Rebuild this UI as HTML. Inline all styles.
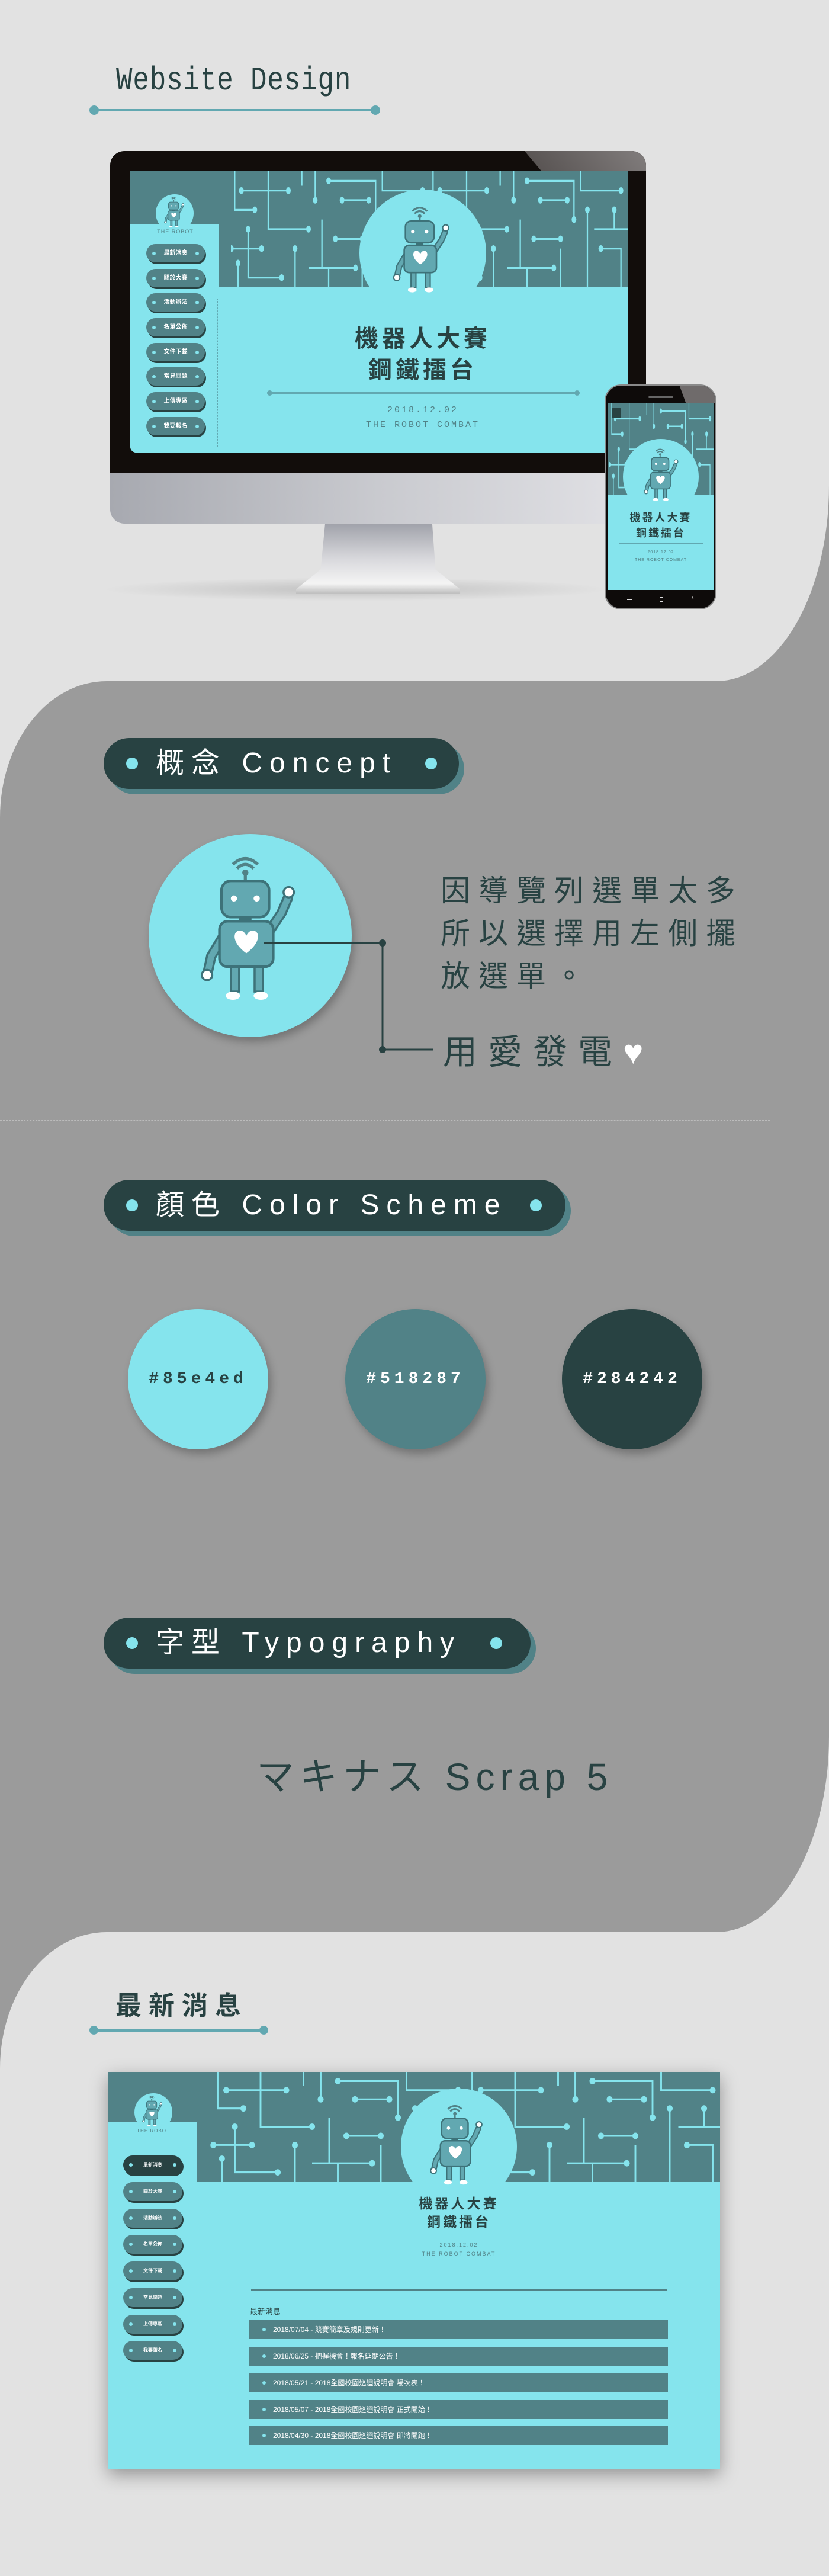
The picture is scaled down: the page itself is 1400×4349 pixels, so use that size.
<!DOCTYPE html>
<html><head><meta charset="utf-8">
<style>
*{margin:0;padding:0;box-sizing:border-box}
body{width:1400px;height:4349px;position:relative;background:#9b9b9b;font-family:"Liberation Sans","Noto Sans CJK TC",sans-serif;overflow:hidden}
.a{position:absolute}
.pill{position:absolute;left:175px;height:86px;border-radius:43px;background:#284242;box-shadow:9px 9px 0 #518287;color:#fff;font-size:48px;line-height:86px;white-space:nowrap}
.pill .d{position:absolute;top:33px;width:20px;height:20px;border-radius:50%;background:#85e4ed}
.pill .t{position:absolute;left:88px;top:0;letter-spacing:12px}
.nav{position:absolute;border-radius:20px;background:#518287;box-shadow:2px 3px 0 #284242;color:#fff;text-align:center;font-weight:bold}
.nav:before,.nav:after{content:"";position:absolute;top:50%;width:6px;height:6px;margin-top:-3px;border-radius:50%;background:#85e4ed}
.nav:before{left:10px}.nav:after{right:10px}
.row{position:absolute;left:238px;width:707px;height:32px;background:#518287;color:#fff;font-size:12px;line-height:32px;padding-left:40px}
.row:before{content:"";position:absolute;left:22px;top:13px;width:6px;height:6px;border-radius:50%;background:#85e4ed}
.cc{position:absolute;top:2210px;width:237px;height:237px;border-radius:50%;box-shadow:5px 8px 14px rgba(0,0,0,.25);text-align:center;line-height:237px;font-size:28px;font-weight:bold;letter-spacing:7px;font-family:'Liberation Mono',monospace}
</style></head><body>
<svg width="0" height="0" style="position:absolute">
<defs>
<symbol id="robot" viewBox="0 0 120 150">
<path d="M47 15Q55 7 63 15M43 11Q55 0 67 11" stroke="#518287" stroke-width="3" fill="none"/>
<circle cx="55" cy="19" r="3" fill="#518287"/><path d="M55 19V27" stroke="#518287" stroke-width="3"/>
<path d="M78 76L90 58L96 44" stroke="#3d7279" stroke-width="10" fill="none" stroke-linecap="round"/>
<path d="M78 76L90 58L96 44" stroke="#62a8b1" stroke-width="6" fill="none" stroke-linecap="round"/>
<path d="M34 80L22 100L19 114" stroke="#3d7279" stroke-width="10" fill="none" stroke-linecap="round"/>
<path d="M34 80L22 100L19 114" stroke="#62a8b1" stroke-width="6" fill="none" stroke-linecap="round"/>
<circle cx="97" cy="38" r="5" fill="#fff" stroke="#3d7279" stroke-width="2"/>
<circle cx="18" cy="118" r="5" fill="#fff" stroke="#3d7279" stroke-width="2"/>
<rect x="41" y="106" width="8" height="28" fill="#62a8b1" stroke="#3d7279" stroke-width="2"/>
<rect x="64" y="106" width="8" height="28" fill="#62a8b1" stroke="#3d7279" stroke-width="2"/>
<ellipse cx="43" cy="138" rx="7" ry="4" fill="#fff"/><ellipse cx="70" cy="138" rx="7" ry="4" fill="#fff"/>
<rect x="49" y="60" width="12" height="8" fill="#3d7279"/>
<rect x="32" y="27" width="46" height="35" rx="9" fill="#62a8b1" stroke="#3d7279" stroke-width="2.5"/>
<circle cx="44" cy="44" r="3" fill="#fff"/><circle cx="66" cy="44" r="3" fill="#fff"/>
<rect x="30" y="66" width="52" height="44" rx="8" fill="#62a8b1" stroke="#3d7279" stroke-width="2.5"/>
<path d="M56 97C41 86 43 75 50 75C53 75 55 78 56 80C57 78 59 75 62 75C69 75 71 86 56 97Z" fill="#fff"/>
</symbol>
<symbol id="circ" viewBox="0 0 300 120" preserveAspectRatio="none">
<g stroke="#85e4ed" stroke-width="2" fill="none">
<path d="M10 0V40H40M20 20H90M60 0V60H120M30 60V110H80M100 80V120M130 0V30M150 10H220V50M140 50V100H190M160 70H200M230 0V20H290M240 40V120M250 60H300M260 80H290V120M200 80V120M5 80H50M110 0V15M280 40V60M170 30H210M120 100H150V120M15 95V120"/>
</g>
<g fill="#85e4ed">
<circle cx="40" cy="40" r="3.5"/><circle cx="20" cy="20" r="3.5"/><circle cx="90" cy="20" r="3.5"/><circle cx="120" cy="60" r="3.5"/><circle cx="30" cy="60" r="3.5"/><circle cx="80" cy="110" r="3.5"/><circle cx="100" cy="80" r="3.5"/><circle cx="130" cy="30" r="3.5"/><circle cx="150" cy="10" r="3.5"/><circle cx="220" cy="50" r="3.5"/><circle cx="190" cy="100" r="3.5"/><circle cx="160" cy="70" r="3.5"/><circle cx="200" cy="70" r="3.5"/><circle cx="290" cy="20" r="3.5"/><circle cx="240" cy="40" r="3.5"/><circle cx="260" cy="80" r="3.5"/><circle cx="50" cy="80" r="3.5"/><circle cx="5" cy="80" r="3.5"/><circle cx="280" cy="40" r="3.5"/><circle cx="170" cy="30" r="3.5"/><circle cx="210" cy="30" r="3.5"/><circle cx="15" cy="95" r="3.5"/>
</g>
</symbol>
</defs></svg>

<div class="a" style="left:0;top:0;width:1400px;height:1150px;background:#e2e2e2;border-bottom-right-radius:190px 330px"></div>
<div class="a" style="left:0;top:1150px;width:1400px;height:2112px;background:#e2e2e2"></div>
<div class="a" style="left:0;top:1150px;width:1400px;height:2112px;background:#9b9b9b;border-top-left-radius:180px 230px;border-bottom-right-radius:190px 330px"></div>
<div class="a" style="left:0;top:3262px;width:1400px;height:1087px;background:#e2e2e2;border-top-left-radius:180px 230px"></div>

<div class="a" style="left:196px;top:104px;font-size:56px;letter-spacing:1px;color:#284242;font-family:'Liberation Mono',monospace;transform:scaleX(0.82);transform-origin:0 0;white-space:nowrap">Website Design</div>
<div class="a" style="left:158px;top:184px;width:476px;height:4px;background:#62a8b1"></div>
<div class="a" style="left:151px;top:178px;width:16px;height:16px;border-radius:50%;background:#62a8b1"></div>
<div class="a" style="left:626px;top:178px;width:16px;height:16px;border-radius:50%;background:#62a8b1"></div>

<!-- monitor -->
<div class="a" style="left:170px;top:975px;width:860px;height:40px;border-radius:50%;background:radial-gradient(ellipse,rgba(0,0,0,.15),rgba(0,0,0,0) 70%)"></div>
<div class="a" style="left:186px;top:255px;width:905px;height:544px;background:#120d0b;border-radius:24px 24px 0 0;overflow:hidden">
 <div class="a" style="left:700px;top:0;width:260px;height:34px;background:linear-gradient(90deg,#5a5554,#8c8888);transform:skewX(40deg);transform-origin:0 0"></div>
</div>
<div class="a" style="left:186px;top:799px;width:905px;height:85px;background:linear-gradient(90deg,#a7a9b0,#c9cacf 50%,#e2e2e6);border-radius:0 0 24px 24px"></div>
<div class="a" style="left:500px;top:884px;width:277px;height:119px;background:linear-gradient(180deg,#a0a2aa,#d8d8dc 50%,#f4f4f4 85%,#bbb);clip-path:polygon(17.7% 0,83% 0,85% 65%,100% 93%,100% 100%,0 100%,0 93%,15% 65%)"></div>
<div class="a" style="left:220px;top:289px;width:840px;height:475px;background:#85e4ed;border-bottom-left-radius:10px;overflow:hidden">
 <div class="a" style="left:0;top:0;width:840px;height:196px;background:#518287"></div>
 <svg class="a" style="left:165px;top:0" width="675" height="196"><use href="#circ" width="340" height="196"/><use href="#circ" x="335" width="340" height="196"/></svg>
 <div class="a" style="left:0;top:89px;width:150px;height:386px;background:#85e4ed"></div>
 <div class="a" style="left:150px;top:196px;width:690px;height:279px;background:#85e4ed"></div>
 <div class="a" style="left:150px;top:89px;width:20px;height:107px;background:#518287;border-bottom-left-radius:16px"></div>
 <div class="a" style="left:387px;top:31px;width:214px;height:214px;border-radius:50%;background:#85e4ed"></div>
 <svg class="a" style="left:431px;top:56px" width="126" height="157"><use href="#robot" width="126" height="157"/></svg>
 <div class="a" style="left:43px;top:39px;width:64px;height:64px;border-radius:50%;background:#85e4ed"></div>
 <svg class="a" style="left:52px;top:42px" width="46" height="56"><use href="#robot" width="46" height="56"/></svg>
 <div class="a" style="left:36px;top:97px;width:80px;text-align:center;font-size:9px;letter-spacing:1px;color:#518287">THE ROBOT</div>
 <div class="nav" style="left:27px;top:123px;width:99px;height:31px;line-height:31px;font-size:10px">最新消息</div>
 <div class="nav" style="left:27px;top:165px;width:99px;height:31px;line-height:31px;font-size:10px">關於大賽</div>
 <div class="nav" style="left:27px;top:206px;width:99px;height:31px;line-height:31px;font-size:10px">活動辦法</div>
 <div class="nav" style="left:27px;top:248px;width:99px;height:31px;line-height:31px;font-size:10px">名單公佈</div>
 <div class="nav" style="left:27px;top:290px;width:99px;height:31px;line-height:31px;font-size:10px">文件下載</div>
 <div class="nav" style="left:27px;top:331px;width:99px;height:31px;line-height:31px;font-size:10px">常見問題</div>
 <div class="nav" style="left:27px;top:373px;width:99px;height:31px;line-height:31px;font-size:10px">上傳專區</div>
 <div class="nav" style="left:27px;top:415px;width:99px;height:31px;line-height:31px;font-size:10px">我要報名</div>
 <div class="a" style="left:147px;top:215px;height:250px;border-left:1px dashed #62a8b1"></div>
 <div class="a" style="left:294px;top:257px;width:400px;text-align:center;font-size:40px;font-weight:bold;color:#284242;letter-spacing:6px;line-height:53px">機器人大賽<br>鋼鐵擂台</div>
 <div class="a" style="left:234px;top:373px;width:521px;height:3px;background:#62a8b1"></div>
 <div class="a" style="left:231px;top:370px;width:9px;height:9px;border-radius:50%;background:#62a8b1"></div>
 <div class="a" style="left:750px;top:370px;width:9px;height:9px;border-radius:50%;background:#62a8b1"></div>
 <div class="a" style="left:294px;top:391px;width:400px;text-align:center;font-size:15px;color:#518287;letter-spacing:3px;line-height:25px;font-family:'Liberation Mono',monospace">2018.12.02<br>THE ROBOT COMBAT</div>
</div>

<!-- phone -->
<div class="a" style="left:1021px;top:649px;width:189px;height:380px;background:#0e0b0a;border-radius:28px;border:2px solid #8a8a8a;overflow:hidden">
 <div class="a" style="left:130px;top:0;width:80px;height:30px;background:#6f6b6b;transform:skewX(20deg)"></div>
 <div class="a" style="left:72px;top:18px;width:42px;height:3px;background:#666;border-radius:2px"></div>
 <div class="a" style="left:4px;top:30px;width:178px;height:315px;background:#85e4ed;overflow:hidden">
  <div class="a" style="left:0;top:0;width:178px;height:155px;background:#518287"></div>
  <svg class="a" style="left:0;top:0" width="178" height="155"><use href="#circ" width="178" height="155"/></svg>
  <div class="a" style="left:25px;top:60px;width:128px;height:128px;border-radius:50%;background:#85e4ed"></div>
  <svg class="a" style="left:52px;top:74px" width="78" height="96"><use href="#robot" width="78" height="96"/></svg>
  <div class="a" style="left:6px;top:8px;width:16px;height:16px;background:#284242;border-radius:2px"></div>
  <div class="a" style="left:0;top:180px;width:178px;text-align:center;font-size:18px;font-weight:bold;color:#284242;letter-spacing:3px;line-height:26px">機器人大賽<br>鋼鐵擂台</div>
  <div class="a" style="left:18px;top:236px;width:142px;height:2px;background:#62a8b1"></div>
  <div class="a" style="left:0;top:245px;width:178px;text-align:center;font-size:7px;color:#518287;letter-spacing:1px;line-height:13px">2018.12.02<br>THE ROBOT COMBAT</div>
 </div>
 <div class="a" style="left:36px;top:360px;width:8px;height:2px;background:#ddd"></div>
 <div class="a" style="left:91px;top:357px;width:6px;height:8px;border:1px solid #ddd"></div>
 <div class="a" style="left:145px;top:352px;color:#ddd;font-size:11px">‹</div>
</div>

<!-- Concept -->
<div class="pill" style="top:1246px;width:600px"><div class="d" style="left:38px"></div><div class="t">概念 Concept</div><div class="d" style="left:543px"></div></div>
<div class="a" style="left:251px;top:1408px;width:343px;height:343px;border-radius:50%;background:#85e4ed;box-shadow:4px 8px 14px rgba(0,0,0,.25)"></div>
<svg class="a" style="left:318px;top:1440px" width="210" height="262"><use href="#robot" width="210" height="262"/></svg>
<svg class="a" style="left:440px;top:1585px" width="300" height="195">
<path d="M6 7H206V187H292" stroke="#284242" stroke-width="3" fill="none"/>
<circle cx="206" cy="7" r="6" fill="#284242"/><circle cx="206" cy="187" r="6" fill="#284242"/>
</svg>
<div class="a" style="left:744px;top:1468px;font-size:50px;line-height:72px;letter-spacing:14px;color:#284242;width:660px">因導覽列選單太多<br>所以選擇用左側擺<br>放選單。</div>
<div class="a" style="left:748px;top:1738px;font-size:58px;line-height:78px;letter-spacing:18px;color:#284242">用愛發電<span style="color:#fff">♥</span></div>
<div class="a" style="left:0;top:1891px;width:1300px;border-top:1px dashed #bcbcbc"></div>

<!-- Color scheme -->
<div class="pill" style="top:1992px;width:780px"><div class="d" style="left:38px"></div><div class="t">顏色 Color Scheme</div><div class="d" style="left:720px"></div></div>
<div class="cc" style="left:216px;background:#85e4ed;color:#284242">#85e4ed</div>
<div class="cc" style="left:583px;background:#518287;color:#fff">#518287</div>
<div class="cc" style="left:949px;background:#284242;color:#fff">#284242</div>
<div class="a" style="left:0;top:2628px;width:1300px;border-top:1px dashed #bcbcbc"></div>

<!-- Typography -->
<div class="pill" style="top:2731px;width:721px"><div class="d" style="left:38px"></div><div class="t">字型 Typography</div><div class="d" style="left:653px"></div></div>
<div class="a" style="left:433px;top:2960px;font-size:64px;line-height:80px;letter-spacing:9px;color:#284242;white-space:nowrap">マキナス Scrap 5</div>

<!-- News -->
<div class="a" style="left:195px;top:3360px;font-size:44px;line-height:54px;letter-spacing:12px;color:#284242;font-weight:bold">最新消息</div>
<div class="a" style="left:158px;top:3426px;width:288px;height:4px;background:#62a8b1"></div>
<div class="a" style="left:151px;top:3420px;width:15px;height:15px;border-radius:50%;background:#62a8b1"></div>
<div class="a" style="left:438px;top:3420px;width:15px;height:15px;border-radius:50%;background:#62a8b1"></div>

<div class="a" style="left:183px;top:3498px;width:1033px;height:670px;background:#85e4ed;box-shadow:0 10px 28px rgba(0,0,0,.35);overflow:hidden">
 <div class="a" style="left:0;top:0;width:1033px;height:185px;background:#518287"></div>
 <svg class="a" style="left:170px;top:0" width="863" height="185"><use href="#circ" width="435" height="185"/><use href="#circ" x="430" width="435" height="185"/></svg>
 <div class="a" style="left:0;top:85px;width:149px;height:585px;background:#85e4ed"></div>
 <div class="a" style="left:149px;top:185px;width:884px;height:485px;background:#85e4ed"></div>
 <div class="a" style="left:149px;top:85px;width:20px;height:100px;background:#518287;border-bottom-left-radius:16px"></div>
 <div class="a" style="left:494px;top:28px;width:196px;height:196px;border-radius:50%;background:#85e4ed"></div>
 <svg class="a" style="left:530px;top:52px" width="120" height="146"><use href="#robot" width="120" height="146"/></svg>
 <div class="a" style="left:44px;top:36px;width:64px;height:64px;border-radius:50%;background:#85e4ed"></div>
 <svg class="a" style="left:52px;top:39px" width="46" height="56"><use href="#robot" width="46" height="56"/></svg>
 <div class="a" style="left:36px;top:95px;width:80px;text-align:center;font-size:8px;letter-spacing:1px;color:#518287">THE ROBOT</div>
 <div class="nav" style="left:25px;top:141px;width:100px;height:32px;line-height:32px;font-size:8px;background:#284242">最新消息</div>
 <div class="nav" style="left:25px;top:186px;width:100px;height:32px;line-height:32px;font-size:8px">關於大賽</div>
 <div class="nav" style="left:25px;top:231px;width:100px;height:32px;line-height:32px;font-size:8px">活動辦法</div>
 <div class="nav" style="left:25px;top:275px;width:100px;height:32px;line-height:32px;font-size:8px">名單公佈</div>
 <div class="nav" style="left:25px;top:320px;width:100px;height:32px;line-height:32px;font-size:8px">文件下載</div>
 <div class="nav" style="left:25px;top:365px;width:100px;height:32px;line-height:32px;font-size:8px">常見問題</div>
 <div class="nav" style="left:25px;top:410px;width:100px;height:32px;line-height:32px;font-size:8px">上傳專區</div>
 <div class="nav" style="left:25px;top:454px;width:100px;height:32px;line-height:32px;font-size:8px">我要報名</div>
 <div class="a" style="left:149px;top:200px;height:360px;border-left:1px dashed #62a8b1"></div>
 <div class="a" style="left:442px;top:207px;width:300px;text-align:center;font-size:23px;font-weight:bold;color:#284242;letter-spacing:4px;line-height:31px">機器人大賽<br>鋼鐵擂台</div>
 <div class="a" style="left:436px;top:273px;width:312px;height:1px;background:#518287"></div>
 <div class="a" style="left:442px;top:285px;width:300px;text-align:center;font-size:9px;color:#518287;letter-spacing:2px;line-height:15px">2018.12.02<br>THE ROBOT COMBAT</div>
 <div class="a" style="left:241px;top:367px;width:703px;height:2px;background:#518287"></div>
 <div class="a" style="left:239px;top:394px;font-size:13px;color:#284242">最新消息</div>
 <div class="row" style="top:419px">2018/07/04 - 競賽簡章及規則更新！</div>
 <div class="row" style="top:464px">2018/06/25 - 把握機會！報名延期公告！</div>
 <div class="row" style="top:509px">2018/05/21 - 2018全國校園巡迴說明會 場次表！</div>
 <div class="row" style="top:554px">2018/05/07 - 2018全國校園巡迴說明會 正式開始！</div>
 <div class="row" style="top:598px">2018/04/30 - 2018全國校園巡迴說明會 即將開跑！</div>
</div>
</body></html>
